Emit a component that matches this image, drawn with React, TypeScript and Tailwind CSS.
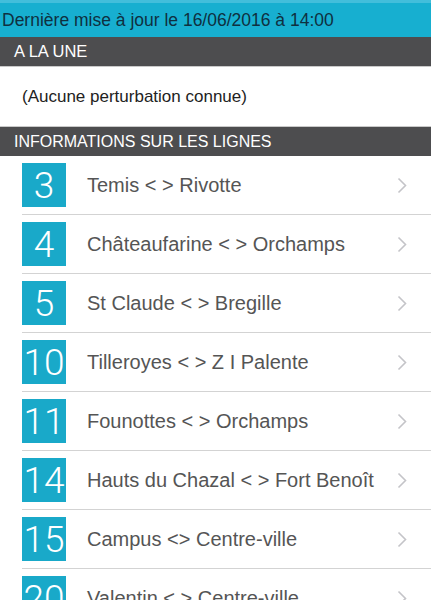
import React from "react";

const lines = [
  { n: "3", t: "Temis < > Rivotte" },
  { n: "4", t: "Châteaufarine < > Orchamps" },
  { n: "5", t: "St Claude < > Bregille" },
  { n: "10", t: "Tilleroyes < > Z I Palente" },
  { n: "11", t: "Founottes < > Orchamps" },
  { n: "14", t: "Hauts du Chazal < > Fort Benoît" },
  { n: "15", t: "Campus <> Centre-ville" },
  { n: "20", t: "Valentin < > Centre-ville" },
];

function Chevron() {
  return (
    <svg width="10" height="17" viewBox="0 0 10 17" className="shrink-0">
      <path d="M1.5 1.5 L8.5 8.5 L1.5 15.5" fill="none" stroke="#c4c4c8" strokeWidth="1.6" />
    </svg>
  );
}

export default function App() {
  return (
    <div
      className="w-[431px] h-[600px] overflow-hidden bg-white"
      style={{ fontFamily: '"Liberation Sans", Arial, sans-serif' }}
    >
      <div className="h-[3px] bg-[#42bedb]" />
      <div className="h-[34px] bg-[#17afd0] flex items-center pl-[2px] pt-[1px] text-[17.5px] text-[#0f3040] whitespace-nowrap">
        Dernière mise à jour le 16/06/2016 à 14:00
      </div>
      <div className="h-[29px] bg-[#4d4d4f] flex items-center pl-[14px] text-[16.5px] text-white">
        A LA UNE
      </div>
      <div className="h-px bg-[#c9c9c9]" />
      <div className="h-[59px] flex items-center pl-[22px] text-[17px] text-[#222]">
        (Aucune perturbation connue)
      </div>
      <div className="h-px bg-[#c9c9c9]" />
      <div className="h-[29px] bg-[#4d4d4f] flex items-center pl-[14px] text-[16px] text-white">
        INFORMATIONS SUR LES LIGNES
      </div>
      <div className="flex flex-col">
        {lines.map((l) => (
          <div key={l.n} className="flex flex-col">
            <div className="h-[58px] flex items-center pl-[22px] pr-[24px]">
              <div
                className="w-[44px] h-[44px] bg-[#19a9c9] text-white flex items-center justify-center text-[37px] font-light leading-none shrink-0"
                style={{ fontFamily: 'Roboto, "Liberation Sans", sans-serif', fontWeight: 300 }}
              >
                {l.n}
              </div>
              <div className="flex-1 pl-[21px] text-[20px] text-[#555] whitespace-nowrap">{l.t}</div>
              <Chevron />
            </div>
            <div className="ml-[22px] h-px bg-[#d3d3d3]" />
          </div>
        ))}
      </div>
    </div>
  );
}
